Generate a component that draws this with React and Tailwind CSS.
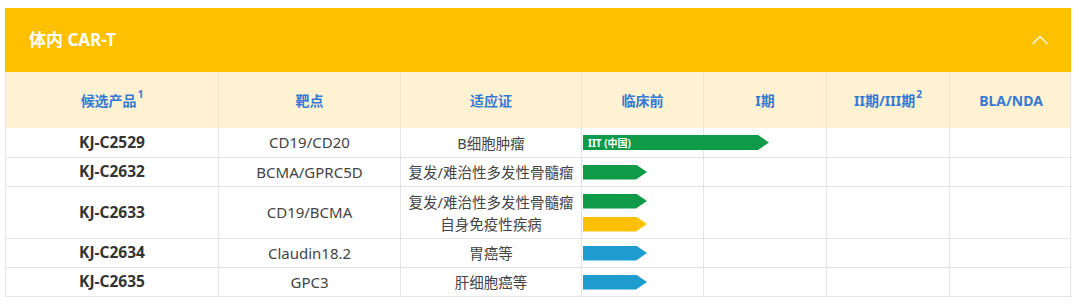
import React from 'react'

const COLS = 'grid grid-cols-[213px_182px_181px_122px_123px_123px_122px]'

const BAR_COLORS = {
  green: 'bg-[#0f9a47]',
  yellow: 'bg-[#ffc000]',
  blue: 'bg-[#1e9ccf]',
}

const ROWS = [
  { id: 'KJ-C2529', target: 'CD19/CD20', ind: ['B细胞肿瘤'], bars: [{ color: 'green', label: 'IIT (中国)', long: true }] },
  { id: 'KJ-C2632', target: 'BCMA/GPRC5D', ind: ['复发/难治性多发性骨髓瘤'], bars: [{ color: 'green' }] },
  { id: 'KJ-C2633', target: 'CD19/BCMA', ind: ['复发/难治性多发性骨髓瘤', '自身免疫性疾病'], bars: [{ color: 'green' }, { color: 'yellow' }] },
  { id: 'KJ-C2634', target: 'Claudin18.2', ind: ['胃癌等'], bars: [{ color: 'blue' }] },
  { id: 'KJ-C2635', target: 'GPC3', ind: ['肝细胞癌等'], bars: [{ color: 'blue' }] },
]

function Bar({ color, label, long }) {
  return (
    <div
      className={`h-[15px] shrink-0 flex items-center pl-[5px] ${BAR_COLORS[color]} ${long ? 'w-[186px]' : 'w-[64px]'} [clip-path:polygon(0_0,calc(100%-11px)_0,100%_50%,calc(100%-11px)_100%,0_100%)]`}
    >
      {label && <span className="text-[10px] font-bold text-white leading-none">{label}</span>}
    </div>
  )
}

function HeadCell({ children, last }) {
  return (
    <div className={`flex items-center justify-center text-[14px] font-bold text-[#3579d3] ${last ? '' : 'border-r border-[#f3e6c6]'}`}>
      {children}
    </div>
  )
}

export default function App() {
  return (
    <div className="min-h-screen bg-white pt-[8px] pl-[5px] font-['Noto_Sans','Noto_Sans_CJK_SC',sans-serif]">
      <div className="w-[1066px]">
        {/* 黄色标题栏 */}
        <div className="h-[64px] bg-[#ffc000] flex items-center justify-between pl-[24px] pr-[23px]">
          <h2 className="text-[17px] font-bold text-white">体内 CAR-T</h2>
          <svg width="16" height="10" viewBox="0 0 16 10" fill="none" stroke="#fff6dc" strokeWidth="1.6" strokeLinecap="round" strokeLinejoin="round">
            <polyline points="1 8.5 8 1.5 15 8.5" />
          </svg>
        </div>

        <div className="border-x border-b border-[#e3e3e3]">
          {/* 表头 */}
          <div className={`${COLS} h-[56px] bg-[#fff2d3]`}>
            <HeadCell>
              候选产品<sup className="text-[10px] ml-[1px] -top-[0.6em]">1</sup>
            </HeadCell>
            <HeadCell>靶点</HeadCell>
            <HeadCell>适应证</HeadCell>
            <HeadCell>临床前</HeadCell>
            <HeadCell>I期</HeadCell>
            <HeadCell>
              II期/III期<sup className="text-[10px] ml-[1px] -top-[0.6em]">2</sup>
            </HeadCell>
            <HeadCell last>BLA/NDA</HeadCell>
          </div>

          {ROWS.map((r, i) => (
            <div key={r.id} className={`${COLS} ${i > 0 ? 'border-t border-[#e3e3e3]' : ''} ${r.ind.length > 1 ? 'h-[52px]' : 'h-[29px]'} text-[14.5px]`}>
              <div className="flex items-center justify-center text-[15.5px] font-bold text-[#333] border-r border-[#e3e3e3]">{r.id}</div>
              <div className="flex items-center justify-center text-[15px] text-[#444] border-r border-[#e3e3e3]">{r.target}</div>
              <div className="flex flex-col items-center justify-center text-[#444] leading-[22px] border-r border-[#e3e3e3]">
                {r.ind.map((t) => (
                  <span key={t}>{t}</span>
                ))}
              </div>
              <div className="flex flex-col justify-center gap-[8px] pl-[1px] border-r border-[#e3e3e3]">
                {r.bars.map((b, j) => (
                  <Bar key={j} {...b} />
                ))}
              </div>
              <div className="border-r border-[#e3e3e3]" />
              <div className="border-r border-[#e3e3e3]" />
              <div />
            </div>
          ))}
        </div>
      </div>
    </div>
  )
}
